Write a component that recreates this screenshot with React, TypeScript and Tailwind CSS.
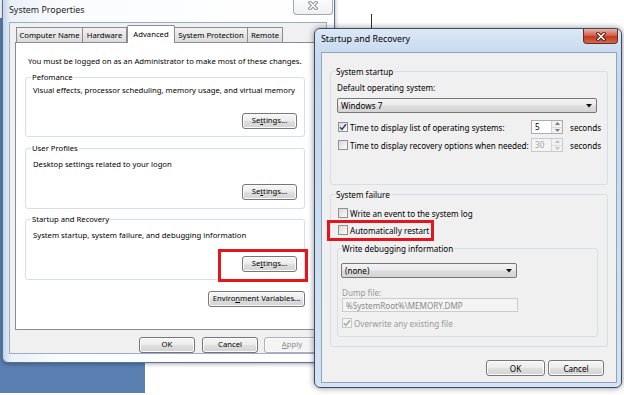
import type { ReactNode } from 'react'

function Btn({ children, className = '' }: { children: ReactNode; className?: string }) {
  return (
    <div
      className={`flex h-[16px] items-center justify-center rounded-[3px] border border-[#777] bg-[linear-gradient(#f6f6f6,#ededed_45%,#dedede_55%,#d3d3d3)] shadow-[inset_0_0_0_1px_#fbfbfb] ${className}`}
    >
      {children}
    </div>
  )
}

function XGlyph({ outline, fill }: { outline: string; fill: string }) {
  return (
    <svg width="10" height="9" viewBox="0 0 10 9">
      <path d="M2 1.5 L8 7.5 M8 1.5 L2 7.5" stroke={outline} strokeWidth="3.4" strokeLinecap="square" />
      <path d="M2 1.5 L8 7.5 M8 1.5 L2 7.5" stroke={fill} strokeWidth="1.5" strokeLinecap="square" />
    </svg>
  )
}

function Check({ checked = false, disabled = false }: { checked?: boolean; disabled?: boolean }) {
  return (
    <span
      className={`flex size-[10px] shrink-0 items-center justify-center border ${
        disabled ? 'border-[#c8c8c8] bg-[#f3f3f3]' : 'border-[#8e8f8f] bg-[linear-gradient(135deg,#d9d9d9,#fbfbfb)]'
      }`}
    >
      {checked && (
        <svg width="8" height="8" viewBox="0 0 8 8">
          <path d="M1 4.2 L3 6.4 L7 1.2" fill="none" stroke={disabled ? '#aaa' : '#2c4370'} strokeWidth="1.5" />
        </svg>
      )}
    </span>
  )
}

function Arrow() {
  return (
    <svg width="6" height="4" viewBox="0 0 6 4">
      <path d="M0 0 H6 L3 3.5 Z" fill="#111" />
    </svg>
  )
}

function Spin({ value, disabled = false }: { value: string; disabled?: boolean }) {
  return (
    <div className={`flex h-[14px] w-[32px] border ${disabled ? 'border-[#c9cbcf] bg-[#f4f4f4] text-[#a0a0a0]' : 'border-[#abadb3] bg-white'}`}>
      <span className="flex-1 pl-[3px] leading-[12px]">{value}</span>
      <div className="flex w-[11px] flex-col border-l border-[#d5d5d5] bg-[#f1f1f1]">
        <span className="flex flex-1 items-center justify-center">
          <svg width="5" height="3" viewBox="0 0 5 3"><path d="M0 3 L2.5 0 L5 3 Z" fill={disabled ? '#c2c2c2' : '#7d7d7d'} /></svg>
        </span>
        <span className="flex flex-1 items-center justify-center border-t border-[#dcdcdc]">
          <svg width="5" height="3" viewBox="0 0 5 3"><path d="M0 0 L2.5 3 L5 0 Z" fill={disabled ? '#c2c2c2' : '#7d7d7d'} /></svg>
        </span>
      </div>
    </div>
  )
}

const tabs = [
  { label: 'Computer Name', w: 'w-[67px]' },
  { label: 'Hardware', w: 'w-[45px]' },
  { label: 'Advanced', w: 'w-[48px]', active: true },
  { label: 'System Protection', w: 'w-[74px]' },
  { label: 'Remote', w: 'w-[36px]' },
]

function SettingsBtn() {
  return (
    <Btn className="w-[55px]">
      Se<span className="underline">t</span>tings...
    </Btn>
  )
}

function SystemProperties() {
  return (
    <div className="absolute left-[2px] top-[-6px] flex h-[369px] w-[333px] flex-col rounded-[6px] border border-[#56739a] bg-[linear-gradient(90deg,#c3d5ea,#eaf1f8_8px,#fbfcfe_60px,#ffffff)] pl-[6px] pr-[7px] pb-[8px] shadow-[0_1px_4px_rgba(0,0,0,0.35)]">
      <div className="flex h-[27px] items-start justify-between">
        <span className="pl-[-1px] pt-[9px] text-[8.9px] leading-[12px] text-[#222]">System Properties</span>
        <div className="mr-[-6px] flex h-[20px] w-[40px] items-end justify-center rounded-b-[4px] border border-t-0 border-[#a2a9b3] bg-[linear-gradient(#ffffff,#eef0f3)] pb-[4px]">
          <XGlyph outline="#8a8f96" fill="#ffffff" />
        </div>
      </div>
      <div className="flex h-[332px] flex-col border border-[#9badc4] bg-[#f0f0f0] px-[5px] pt-[2px] text-[7.7px]">
        <div className="flex h-[17px] items-end pl-[1px]">
          {tabs.map(t => (
            <div
              key={t.label}
              className={`flex items-center justify-center border border-b-0 border-[#898c95] leading-[11px] ${t.w} ${
                t.active
                  ? 'relative z-10 -mb-[1px] h-[18px] rounded-t-[2px] bg-white'
                  : '-ml-[1px] h-[15px] bg-[linear-gradient(#f3f3f3,#e6e6e6_50%,#dcdcdc)] first:ml-0'
              }`}
            >
              {t.label}
            </div>
          ))}
        </div>
        <div className="h-[288px] border border-[#898c95] bg-white pl-[9px]">
          <p className="mt-[13px] pl-[3px] leading-[11px]">You must be logged on as an Administrator to make most of these changes.</p>

          <fieldset className="mt-[5px] w-[280px] rounded-[3px] border border-[#d5dfe5] px-[7px] pb-[7px]">
            <legend className="-ml-[2px] px-[1px] leading-[11px]">Pefomance</legend>
            <p className="mt-[2px] leading-[11px]">Visual effects, processor scheduling, memory usage, and virtual memory</p>
            <div className="mt-[17px] flex justify-end">
              <SettingsBtn />
            </div>
          </fieldset>

          <fieldset className="mt-[6px] w-[280px] rounded-[3px] border border-[#d5dfe5] px-[7px] pb-[8px]">
            <legend className="-ml-[2px] px-[1px] leading-[11px]">User Profiles</legend>
            <p className="mt-[5px] leading-[11px]">Desktop settings related to your logon</p>
            <div className="mt-[14px] flex justify-end">
              <SettingsBtn />
            </div>
          </fieldset>

          <fieldset className="mt-[5px] w-[280px] rounded-[3px] border border-[#d5dfe5] px-[7px] pb-[7px]">
            <legend className="-ml-[2px] px-[1px] leading-[11px]">Startup and Recovery</legend>
            <p className="mt-[5px] leading-[11px]">System startup, system failure, and debugging information</p>
            <div className="mt-[15px] flex justify-end">
              <div className="relative">
                <SettingsBtn />
                <div className="absolute -bottom-[10px] -left-[24px] -right-[11px] -top-[7px] border-[3px] border-[#e3161e]" />
              </div>
            </div>
          </fieldset>

          <div className="mt-[11px] flex w-[280px] justify-end">
            <Btn className="w-[97px]">
              Enviro<span className="underline">n</span>ment Variables...
            </Btn>
          </div>
        </div>
        <div className="mt-[7px] flex pl-[124px]">
          <Btn className="w-[56px]">OK</Btn>
          <Btn className="ml-[7px] w-[56px]">Cancel</Btn>
          <Btn className="ml-[6px] w-[56px] border-[#adb2b5] bg-none bg-[#f4f4f4] text-[#8a8a8a]">
            <span className="underline">A</span>pply
          </Btn>
        </div>
      </div>
    </div>
  )
}

function StartupRecovery() {
  return (
    <div className="absolute left-[314px] top-[28px] flex h-[360px] w-[308px] flex-col rounded-[6px] border border-[#3a4d66] bg-[linear-gradient(#dce8f5,#c9dcf0_22px,#c3d7ed_60px,#d4e3f3)] pl-[6px] pr-[4px] pb-[4px] shadow-[0_0_6px_rgba(0,0,0,0.45)]">
      <div className="flex h-[23px] items-start justify-between">
        <span className="pt-[4px] text-[8.9px] leading-[12px] text-black">Startup and Recovery</span>
        <div className="mr-[-1px] flex h-[15px] w-[35px] items-center justify-center rounded-b-[4px] border border-t-0 border-[#6b2a22] bg-[linear-gradient(#eab0a4,#d6624f_45%,#c2391f_55%,#d26a4f)]">
          <XGlyph outline="#5a1d16" fill="#ffffff" />
        </div>
      </div>
      <div className="flex h-[331px] flex-col border border-[#8fa4bf] bg-[#f0f0f0] text-[8.1px] leading-[11px]">
        <fieldset className="ml-[8px] mt-[13px] w-[278px] rounded-[3px] border border-[#d5dfe5] pl-[6px] pb-[32px]">
          <legend className="-ml-[2px] px-[1px] leading-[11px]">System startup</legend>
          <p className="mt-[5px]">Default operating system:</p>
          <div className="mt-[5px] flex h-[15px] w-[260px] items-center justify-between rounded-[2px] border border-[#777] bg-[linear-gradient(#f3f3f3,#ebebeb_45%,#dddddd_55%,#d4d4d4)] pl-[3px] pr-[4px]">
            <span>Windows 7</span>
            <Arrow />
          </div>
          <div className="mt-[7px] flex h-[14px] items-center pl-[1px]">
            <Check checked />
            <span className="ml-[2px] w-[181px]">Time to display list of operating systems:</span>
            <Spin value="5" />
            <span className="ml-[7px]">seconds</span>
          </div>
          <div className="mt-[4px] flex h-[14px] items-center pl-[1px]">
            <Check />
            <span className="ml-[2px] w-[181px]">Time to display recovery options when needed:</span>
            <Spin value="30" disabled />
            <span className="ml-[7px]">seconds</span>
          </div>
        </fieldset>

        <fieldset className="ml-[8px] mt-[4px] w-[278px] rounded-[3px] border border-[#d5dfe5] pl-[6px] pb-[9px]">
          <legend className="-ml-[2px] px-[1px] leading-[11px]">System failure</legend>
          <div className="mt-[7px] flex h-[12px] items-center pl-[1px]">
            <Check />
            <span className="ml-[2px]">Write an event to the system log</span>
          </div>
          <div className="relative mt-[5px] flex h-[12px] w-fit items-center pl-[1px]">
            <Check />
            <span className="ml-[2px]">Automatically restart</span>
            <div className="absolute -bottom-[5px] -left-[10px] -top-[4px] w-[107px] border-[3px] border-[#e3161e]" />
          </div>
          <fieldset className="mt-[7px] w-[261px] rounded-[3px] border border-[#d5dfe5] pl-[4px] pb-[7px]">
            <legend className="-ml-[1px] px-[1px] leading-[11px]">Write debugging information</legend>
            <div className="-ml-[1px] mt-[9px] flex h-[15px] w-[176px] items-center justify-between rounded-[2px] border border-[#777] bg-[linear-gradient(#f3f3f3,#ebebeb_45%,#dddddd_55%,#d4d4d4)] pl-[3px] pr-[4px]">
              <span>(none)</span>
              <Arrow />
            </div>
            <p className="mt-[9px] text-[#9a9a9a]">Dump file:</p>
            <div className="flex h-[14px] w-[176px] items-center border border-[#c9cbcf] bg-[#f4f4f4] pl-[3px] text-[#8a8a8a]">
              %SystemRoot%\MEMORY.DMP
            </div>
            <div className="mt-[5px] flex h-[12px] items-center">
              <Check checked disabled />
              <span className="ml-[2px] text-[#9a9a9a]">Overwrite any existing file</span>
            </div>
          </fieldset>
        </fieldset>

        <div className="mt-[13px] flex justify-end pr-[12px]">
          <Btn className="w-[59px] border-[#3c7fb1] bg-[linear-gradient(#eaf6fd,#d9f0fc_45%,#bee6fd_55%,#a7d9f5)] shadow-[inset_0_0_0_1px_#48d0ff]">
            OK
          </Btn>
          <Btn className="ml-[3px] w-[56px]">Cancel</Btn>
        </div>
      </div>
    </div>
  )
}

export default function App() {
  return (
    <div className="relative h-[395px] w-[624px] overflow-hidden bg-white font-['Noto_Sans',sans-serif] text-black">
      <div className="absolute left-0 top-[18px] h-[375px] w-[145px] bg-[#5a7fb1]" />
      <SystemProperties />
      <div className="absolute left-[371px] top-[14px] h-[14px] w-px bg-[#333]" />
      <StartupRecovery />
    </div>
  )
}
